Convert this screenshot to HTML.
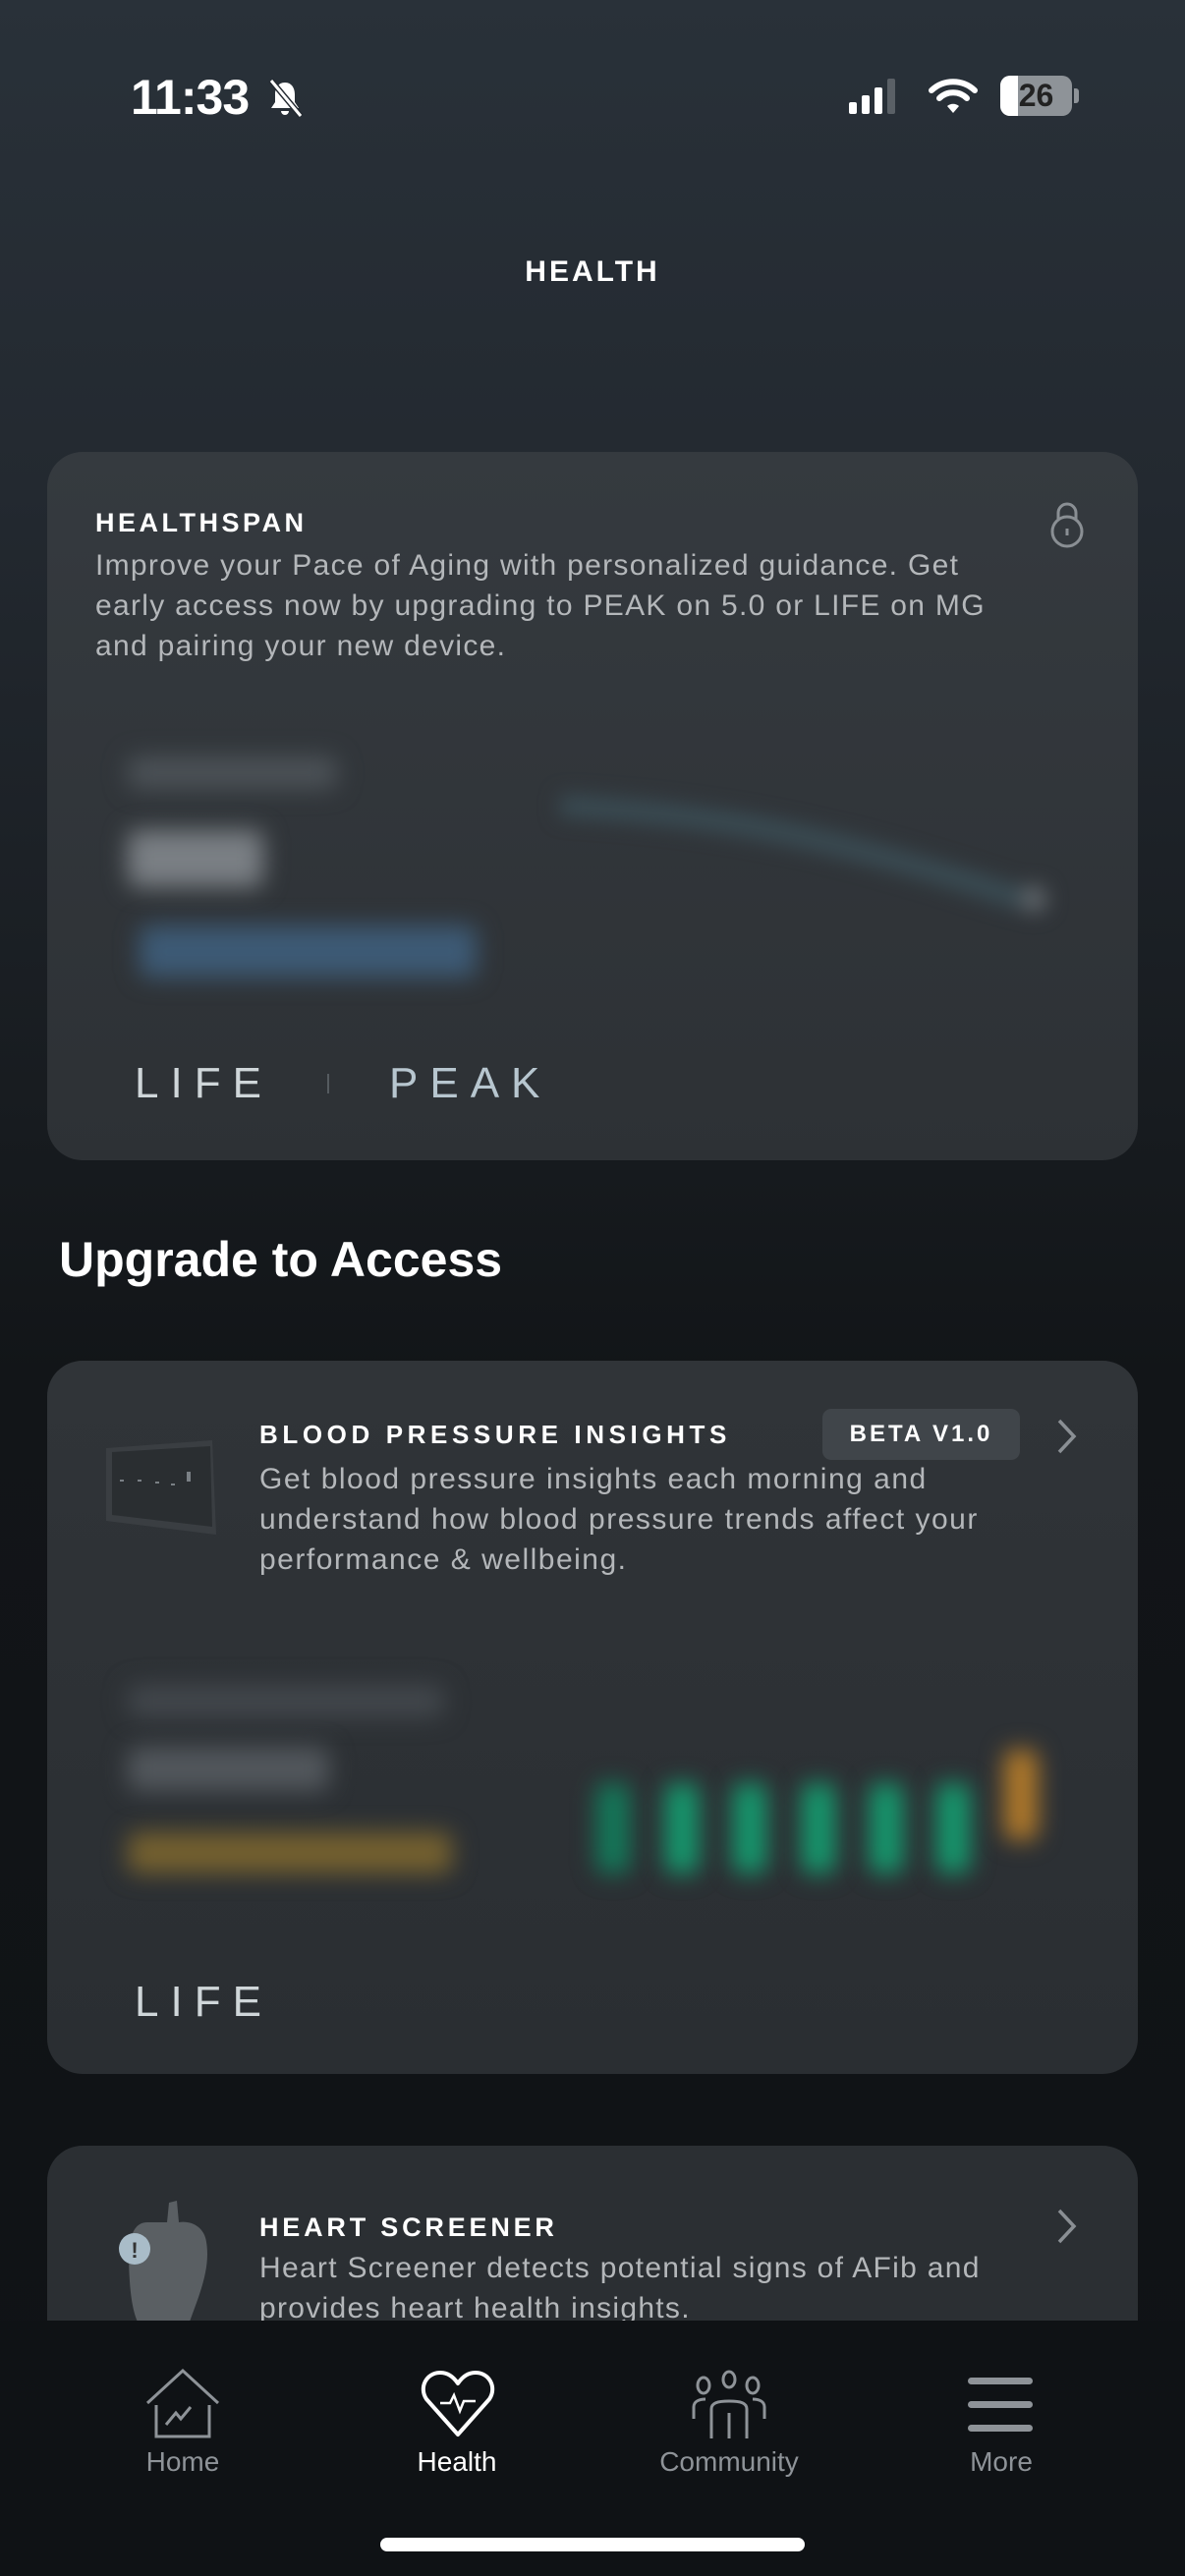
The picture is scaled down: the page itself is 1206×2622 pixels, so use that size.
<!DOCTYPE html>
<html><head><meta charset="utf-8">
<style>
*{margin:0;padding:0;box-sizing:border-box}
body{width:1206px;height:2622px;overflow:hidden;position:relative;font-family:"Liberation Sans",sans-serif;
background:linear-gradient(180deg,#293139 0px,#232930 500px,#171b1f 1150px,#121518 1400px,#0f1215 2622px);color:#fff}
.abs{position:absolute}
.card{position:absolute;left:48px;width:1110px;border-radius:36px}
.blur{position:absolute;filter:blur(12px);border-radius:10px}
.cap{font-weight:bold;letter-spacing:3px;font-size:27px;color:#fff}
.body{font-size:30px;line-height:41px;color:#b4b7ba;white-space:nowrap}
.tier{font-size:44px;letter-spacing:12px;color:#cfd6d9;font-weight:normal}
.nav{position:absolute;top:2362px;left:0;width:1206px;height:260px;background:#0f1215}
.lab{position:absolute;top:2490px;font-size:28px;color:#8e9398;text-align:center;width:200px}
</style></head><body>
<!-- status bar -->
<div class="abs" style="left:133px;top:70px;font-size:50px;font-weight:bold;letter-spacing:-1px">11:33</div>
<svg class="abs" style="left:268px;top:78px" width="44" height="44" viewBox="0 0 44 44"><path d="M22 6c-7 0-10 6-10 12v8l-4 6h28l-4-6v-8c0-6-3-12-10-12z" fill="#fff"/><path d="M18 35a4 4 0 0 0 8 0z" fill="#fff"/><line x1="8" y1="4" x2="38" y2="40" stroke="#232930" stroke-width="6"/><line x1="8" y1="4" x2="38" y2="40" stroke="#fff" stroke-width="3"/></svg>
<svg class="abs" style="left:864px;top:78px" width="60" height="40"><rect x="0" y="26" width="8" height="12" rx="2" fill="#fff"/><rect x="13" y="19" width="8" height="19" rx="2" fill="#fff"/><rect x="26" y="11" width="8" height="27" rx="2" fill="#fff"/><rect x="39" y="2" width="8" height="36" rx="2" fill="#5a6066"/></svg>
<svg class="abs" style="left:944px;top:78px" width="52" height="40" viewBox="0 0 52 40"><path d="M4 14a32 32 0 0 1 44 0" stroke="#fff" stroke-width="6" fill="none" stroke-linecap="round"/><path d="M12 22a20 20 0 0 1 28 0" stroke="#fff" stroke-width="6" fill="none" stroke-linecap="round"/><path d="M20 30l6 7 6-7a9 9 0 0 0-12 0z" fill="#fff"/></svg>
<div class="abs" style="left:1018px;top:77px;width:73px;height:41px;border-radius:10px;background:#8e9398;overflow:hidden"><div style="width:18px;height:41px;background:#fff"></div></div>
<div class="abs" style="left:1018px;top:77px;width:73px;height:41px;font-size:32px;font-weight:bold;color:#222;text-align:center;line-height:41px">26</div>
<div class="abs" style="left:1093px;top:90px;width:5px;height:15px;border-radius:0 3px 3px 0;background:#8e9398"></div>

<div class="abs" style="left:0;width:1206px;top:260px;text-align:center;font-size:30px;font-weight:bold;letter-spacing:3px">HEALTH</div>

<!-- card 1 -->
<div class="card" style="top:460px;height:721px;background:linear-gradient(180deg,#353a3f,#2d3135)"></div>
<div class="abs cap" style="left:97px;top:517px;letter-spacing:3.5px">HEALTHSPAN</div>
<div class="abs body" style="left:97px;top:555px;letter-spacing:1.3px">Improve your Pace of Aging with personalized guidance. Get<br>early access now by upgrading to PEAK on 5.0 or LIFE on MG<br>and pairing your new device.</div>
<svg class="abs" style="left:1066px;top:508px" width="40" height="50" viewBox="0 0 40 50"><path d="M11 22v-8a9 9 0 0 1 18 0v8" stroke="#8a8f94" stroke-width="3" fill="none"/><circle cx="20" cy="33" r="15" stroke="#8a8f94" stroke-width="3" fill="none"/><line x1="20" y1="30" x2="20" y2="37" stroke="#8a8f94" stroke-width="3"/></svg>
<div class="blur" style="left:130px;top:770px;width:213px;height:33px;background:#4c5257"></div>
<div class="blur" style="left:130px;top:845px;width:138px;height:58px;background:#7a7f84"></div>
<div class="blur" style="left:142px;top:942px;width:343px;height:53px;background:#3d5a75"></div>
<svg class="abs" style="left:540px;top:790px;filter:blur(10px)" width="560" height="160"><path d="M30 30 C200 40 300 60 500 125" stroke="#3a4c54" stroke-width="22" fill="none"/><circle cx="512" cy="125" r="14" fill="#5e6469"/></svg>
<div class="abs tier" style="left:137px;top:1078px">LIFE</div>
<div class="abs" style="left:333px;top:1093px;width:2px;height:20px;background:#555b60"></div>
<div class="abs tier" style="left:396px;top:1078px;color:#b7c6cf">PEAK</div>

<div class="abs" style="left:60px;top:1253px;font-size:50px;font-weight:bold">Upgrade to Access</div>

<!-- card 2 -->
<div class="card" style="top:1385px;height:726px;background:linear-gradient(180deg,#303438,#2a2e32)"></div>
<svg class="abs" style="left:104px;top:1466px" width="120" height="98"><path d="M4 8 L112 0 L116 96 L4 82z" fill="#3a3e42"/><path d="M10 12 L110 6 L112 88 L10 76z" fill="#2a2e31"/><g fill="#7a8085"><rect x="18" y="40" width="4" height="2"/><rect x="36" y="40" width="4" height="2"/><rect x="54" y="42" width="4" height="2"/><rect x="70" y="44" width="4" height="2"/><rect x="86" y="32" width="4" height="10"/></g></svg>
<div class="abs cap" style="left:264px;top:1445px;letter-spacing:4.6px;font-size:26px">BLOOD PRESSURE INSIGHTS</div>
<div class="abs" style="left:837px;top:1434px;width:201px;height:52px;border-radius:9px;background:#40454a;font-size:24px;font-weight:bold;letter-spacing:3px;text-align:center;line-height:52px">BETA V1.0</div>
<svg class="abs" style="left:1074px;top:1442px" width="24" height="40"><path d="M4 4 L19 20 L4 36" stroke="#8a8f94" stroke-width="3.5" fill="none"/></svg>
<div class="abs body" style="left:264px;top:1485px;letter-spacing:1.5px">Get blood pressure insights each morning and<br>understand how blood pressure trends affect your<br>performance &amp; wellbeing.</div>
<div class="blur" style="left:130px;top:1715px;width:322px;height:33px;background:#42474c"></div>
<div class="blur" style="left:130px;top:1778px;width:205px;height:45px;background:#52575c"></div>
<div class="blur" style="left:130px;top:1865px;width:330px;height:42px;background:#74602f"></div>
<div class="blur" style="left:607px;top:1815px;width:34px;height:92px;background:#137a5a"></div>
<div class="blur" style="left:677px;top:1815px;width:34px;height:92px;background:#159a6e"></div>
<div class="blur" style="left:746px;top:1815px;width:34px;height:92px;background:#159a6e"></div>
<div class="blur" style="left:816px;top:1815px;width:34px;height:92px;background:#159a6e"></div>
<div class="blur" style="left:885px;top:1815px;width:34px;height:92px;background:#159a6e"></div>
<div class="blur" style="left:953px;top:1815px;width:34px;height:92px;background:#159a6e"></div>
<div class="blur" style="left:1022px;top:1781px;width:34px;height:92px;background:#b27a2a"></div>
<div class="abs tier" style="left:137px;top:2013px">LIFE</div>

<!-- card 3 -->
<div class="card" style="top:2184px;height:300px;background:#2b2f33"></div>
<svg class="abs" style="left:110px;top:2232px" width="110" height="140"><path d="M40 30 C20 30 20 60 22 90 C24 120 30 140 40 140 L80 140 C90 110 105 80 100 50 C98 35 85 28 72 30 L70 8 L62 10 L60 30z" fill="#5a5f63"/><circle cx="27" cy="57" r="16" fill="#a9bcc8"/><text x="27" y="66" font-size="22" font-weight="bold" fill="#333" text-anchor="middle" font-family="Liberation Sans">!</text></svg>
<div class="abs cap" style="left:264px;top:2252px;letter-spacing:3.8px">HEART SCREENER</div>
<svg class="abs" style="left:1074px;top:2246px" width="24" height="40"><path d="M4 4 L19 20 L4 36" stroke="#8a8f94" stroke-width="3.5" fill="none"/></svg>
<div class="abs body" style="left:264px;top:2288px;letter-spacing:1.3px">Heart Screener detects potential signs of AFib and<br>provides heart health insights.</div>

<!-- nav -->
<div class="nav"></div>
<svg class="abs" style="left:146px;top:2410px" width="80" height="72" viewBox="0 0 80 72"><path d="M4 36 L40 3 L76 36" stroke="#8e9398" stroke-width="3" fill="none"/><path d="M13 38 V70 H67 V38" stroke="#8e9398" stroke-width="3" fill="none"/><path d="M23 58 L33 46 L38 52 L48 40" stroke="#8e9398" stroke-width="3" fill="none"/></svg>
<div class="lab" style="left:86px">Home</div>
<svg class="abs" style="left:428px;top:2412px" width="76" height="70" viewBox="0 0 76 70"><path d="M38 66 L6 30 C-2 18 6 3 20 3 C28 3 34 8 38 14 C42 8 48 3 56 3 C70 3 78 18 70 30z" stroke="#fff" stroke-width="4" fill="none" stroke-linejoin="round"/><path d="M20 34 H30 L34 26 L40 42 L44 32 H56" stroke="#fff" stroke-width="2.5" fill="none"/></svg>
<div class="lab" style="left:365px;color:#fff">Health</div>
<svg class="abs" style="left:702px;top:2410px" width="80" height="74" viewBox="0 0 80 74"><g stroke="#8e9398" stroke-width="3" fill="none"><ellipse cx="14" cy="18" rx="6" ry="8"/><ellipse cx="40" cy="12" rx="6" ry="8"/><ellipse cx="64" cy="18" rx="6" ry="8"/><path d="M4 52 V40 C4 34 10 32 16 32"/><path d="M64 32 C70 32 76 34 76 40 V52"/><path d="M22 72 V42 C22 36 28 34 40 34 C52 34 58 36 58 42 V72"/><path d="M40 46 V72"/></g></svg>
<div class="lab" style="left:642px">Community</div>
<svg class="abs" style="left:985px;top:2420px" width="68" height="60"><g fill="#8e9398"><rect x="0" y="0" width="66" height="7" rx="3.5"/><rect x="0" y="24" width="66" height="7" rx="3.5"/><rect x="0" y="48" width="66" height="7" rx="3.5"/></g></svg>
<div class="lab" style="left:919px">More</div>
<div class="abs" style="left:387px;top:2583px;width:432px;height:14px;border-radius:7px;background:#fff"></div>
</body></html>
